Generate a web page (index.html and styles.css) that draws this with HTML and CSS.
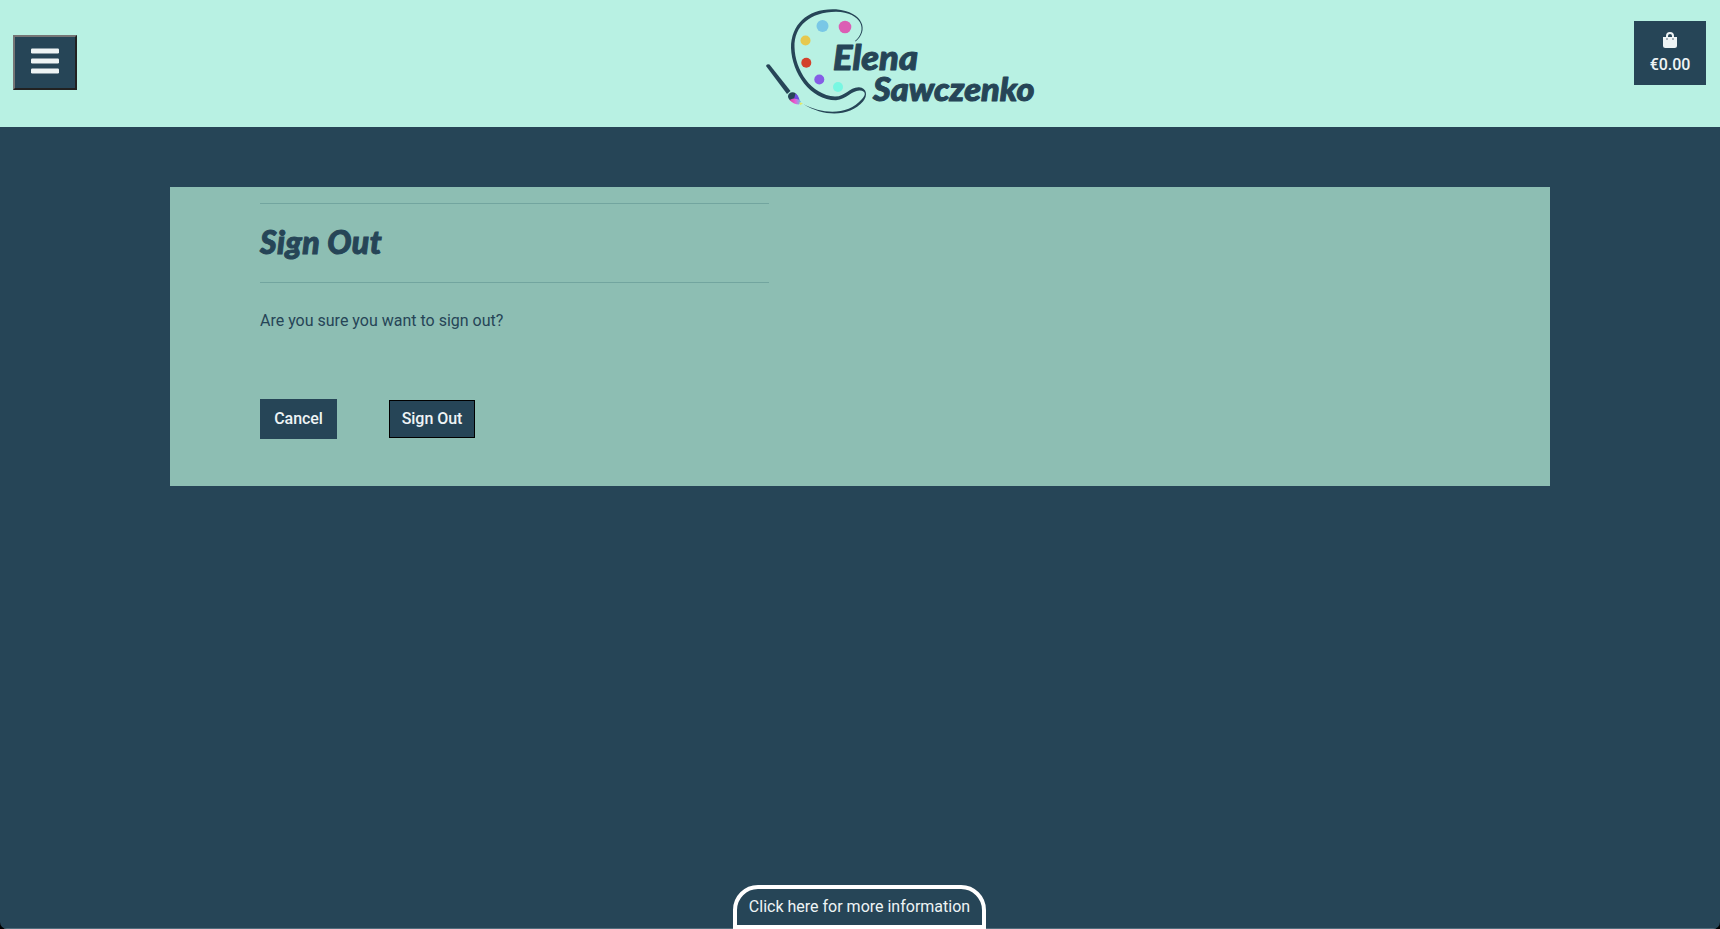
FILE: index.html
```
<!DOCTYPE html>
<html lang="en">
<head>
<meta charset="utf-8">
<title>Elena Sawczenko - Sign Out</title>
<link rel="stylesheet" href="styles.css">
</head>
<body>
<div class="page">
  <header class="header">
    <button class="menu" aria-label="Menu">
      <svg width="28" height="26" viewBox="0 0 28 26"><g fill="#eef4f5"><rect y=".4" width="28" height="5" rx="1.2"/><rect y="10.400" width="28" height="5" rx="1.2"/><rect y="20.400" width="28" height="5" rx="1.2"/></g></svg>
    </button>
    <a class="logo" href="#">
      <svg width="280" height="127" viewBox="760 0 280 127">
        <defs>
          <linearGradient id="tip" x1="0" x2="1"><stop offset="0" stop-color="#d93b9b"/><stop offset=".5" stop-color="#e65fd8"/><stop offset="1" stop-color="#5ecbea"/></linearGradient>
        </defs>
        <path fill="#264557" d="M855.500 41.500C869 31 864 12 836 9.300C808 8 791 24 791 48C792 73 810 100 836 100.300C847 99.300 852 90 860 90.500C866 91 866 95 862 99C848 115.500 823 114.500 803 104C826 118 850 116 863 101.500C868 95.500 867 88 859 87.200C849 87 846 96.500 835 96.500C811 95 795 70 794.500 47C794 26 810 12 836 11.700C862 12.500 868 30 855 41Z"/>
        <path fill="#264557" d="M766 66Q766.500 63.500 769.500 64.500L790.500 91L787 94Z"/>
        <ellipse cx="792.500" cy="96.500" rx="4.500" ry="4.200" fill="#264557"/>
        <path fill="#704be1" d="M795.500 93.500Q800 97 799.500 102L794 99Z"/>
        <path fill="url(#tip)" d="M789.500 100Q793 97.500 796 99Q799 98.500 801 101.500L799 104.500Q794 104.500 789.500 100Z"/>
        <path fill="#e3e96b" d="M799.500 102L803 103.500L800 105.300Z"/>
        <circle cx="822.500" cy="26" r="6" fill="#79c7e6"/>
        <circle cx="845" cy="27" r="6.300" fill="#db5eb4"/>
        <circle cx="805.500" cy="40.500" r="5" fill="#e6c84e"/>
        <circle cx="806.300" cy="62.700" r="5" fill="#d3412c"/>
        <circle cx="819.300" cy="79.500" r="5" fill="#855de5"/>
        <circle cx="838" cy="87" r="5" fill="#78f7e2"/>
        <text class="logo-text" x="833" y="69.500" font-size="34" textLength="85" lengthAdjust="spacingAndGlyphs">Elena</text>
        <text class="logo-text" x="873" y="100.500" font-size="32" textLength="161.500" lengthAdjust="spacingAndGlyphs">Sawczenko</text>
      </svg>
    </a>
    <a class="bag" href="#">
      <svg width="14" height="16" viewBox="0 0 14 16"><path fill="#eef4f5" d="M0 5H3V4A4 4 0 0 1 11 4V5H14V13.500Q14 16 11.500 16H2.500Q0 16 0 13.500ZM5 5H9V4A2 2 0 0 0 5 4Z"/><g fill="#8d9ca5"><circle cx="4" cy="7" r="1"/><circle cx="10" cy="7" r="1"/></g></svg>
      <span>€0.00</span>
    </a>
  </header>
  <main class="panel">
    <section class="content">
      <h1 class="title">Sign Out</h1>
      <p class="question">Are you sure you want to sign out?</p>
      <div class="actions">
        <a class="cancel" href="#">Cancel</a>
        <button class="signout">Sign Out</button>
      </div>
    </section>
  </main>
  <footer class="footer"><button class="info">Click here for more information</button></footer>
</div>
</body>
</html>
```
FILE: styles.css
```
* { box-sizing: border-box; }
body { margin: 0; background: #000; color: #264557; font: 16px/24px Roboto, sans-serif; }
a { color: inherit; text-decoration: none; }
button { font: inherit; padding: 0; }
svg { display: block; }
.page { height: 929px; display: flex; flex-direction: column; background: #264557; border-radius: 0 0 7px 7px; overflow: hidden; }
.header { height: 127px; flex: none; display: flex; justify-content: space-between; align-items: flex-start; padding: 0 14px 0 13px; background: #b8f1e3; }
.menu { width: 64px; height: 55px; margin-top: 35px; padding-bottom: 3px; background: #264557; border: 2px solid; border-color: #767676 #212121 #212121 #767676; display: flex; justify-content: center; align-items: center; }
.logo { margin-left: auto; margin-right: 594px; }
.logo-text { font-family: Lato, sans-serif; font-weight: 900; font-style: italic; fill: #264557; stroke: #264557; stroke-width: 1; stroke-linejoin: round; }
.bag { width: 72px; height: 64px; margin-top: 21px; padding-top: 11px; display: flex; flex-direction: column; align-items: center; gap: 5px; background: #264557; color: #eef4f5; font-weight: 500; letter-spacing: -.1px; }
.panel { width: 1380px; height: 299px; flex: none; margin: 60px auto 0; padding: 16px 90px 0; background: #8dbeb3; }
.content { width: 509px; }
.title { height: 80px; margin: 0; padding-top: 18px; border: solid #72a59f; border-width: 1px 0; font: italic 900 32px/40px Lato, sans-serif; letter-spacing: .4px; -webkit-text-stroke: 1px #264557; }
.question { margin: 26px 0 66px; letter-spacing: 0; }
.actions { display: flex; align-items: center; gap: 52px; color: #eef4f5; font-weight: 500; letter-spacing: -.05px; }
.cancel { width: 77px; height: 40px; line-height: 40px; text-align: center; background: #264557; }
.signout { width: 86px; height: 38px; border: 1px solid #000; background: #264557; color: inherit; letter-spacing: inherit; }
.footer { height: 44px; margin-top: auto; padding-right: 1px; display: flex; justify-content: center; border-bottom: 1px solid #526d7c; }
.info { width: 253px; height: 44px; flex: none; border: 4px solid #fff; border-radius: 25px 25px 0 0; background: #264557; color: #eef4f5; }
```
